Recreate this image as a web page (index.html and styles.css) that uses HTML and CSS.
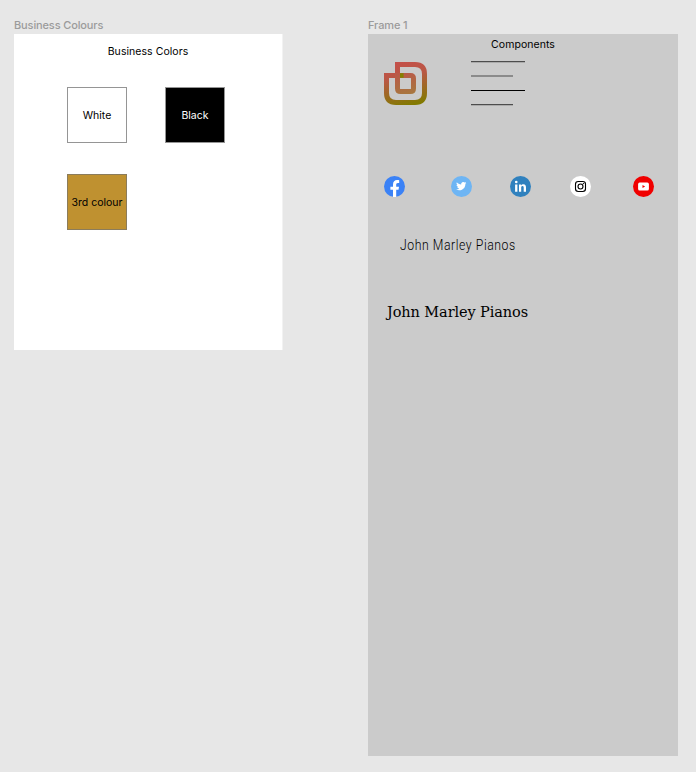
FILE: index.html
```html
<!DOCTYPE html>
<html lang="en">
<head>
<meta charset="utf-8">
<title>Business Colours</title>
<link rel="stylesheet" href="styles.css">
</head>
<body>
<main class="canvas">
  <section class="board">
    <h2 class="board-label">Business Colours</h2>
    <div class="frame colours">
      <h3 class="title">Business Colors</h3>
      <div class="swatches">
        <div class="swatch white">White</div>
        <div class="swatch black">Black</div>
        <div class="swatch gold">3rd colour</div>
      </div>
    </div>
  </section>
  <section class="board">
    <h2 class="board-label">Frame 1</h2>
    <div class="frame components">
      <h3 class="title">Components</h3>
      <div class="brand">
        <svg class="logo" viewBox="0 0 43 43">
          <defs>
            <linearGradient id="outer" gradientUnits="userSpaceOnUse" x1="16" y1="0" x2="26" y2="43"><stop offset="0" stop-color="#c4504a"/><stop offset=".35" stop-color="#b85844"/><stop offset="1" stop-color="#827a00"/></linearGradient>
            <linearGradient id="inner" gradientUnits="userSpaceOnUse" x1="16" y1="0" x2="26" y2="43"><stop offset="0" stop-color="#c4504a"/><stop offset=".3" stop-color="#b85c48"/><stop offset=".8" stop-color="#a67a3e"/></linearGradient>
          </defs>
          <path fill="none" stroke="url(#outer)" stroke-width="5" d="M13.5 14V2.5H31Q40.5 2.5 40.5 12V31Q40.5 40.5 31 40.5H12Q2.5 40.5 2.5 31V13.5H14"/>
          <path fill="none" stroke="url(#inner)" stroke-width="5" d="M13.5 13.5H26.5Q29.5 13.5 29.5 16.5V26.5Q29.5 29.5 26.5 29.5H16.5Q13.5 29.5 13.5 26.5Z"/>
          <path fill="#858000" d="M16 11.2h3.6v4.6H16z"/>
        </svg>
        <svg class="lines" viewBox="0 0 54 46">
          <path stroke="#4d4d4d" stroke-width="1.2" d="M0 1.7h54M0 16h42M0 44.6h42"/>
          <path stroke="#000" d="M0 30.5h54"/>
        </svg>
      </div>
      <div class="social">
        <svg viewBox="0 0 21 21"><circle cx="10.5" cy="10.5" r="10.5" fill="#3b82f6"/><path fill="#fff" d="M9 21v-7.2H6.4v-3H9V8.4C9 5.7 10.6 4.1 13 4.1c1.1 0 2.2.2 2.2.2v2.6h-1.3c-1.3 0-1.7.8-1.7 1.6v2.3H15l-.5 3h-2.3V21z"/></svg>
        <svg viewBox="0 0 21 21"><circle cx="10.5" cy="10.5" r="10.5" fill="#6eb5f4"/><path fill="#fff" transform="translate(5.1 4.9) scale(.43)" d="M23.9 4.6c-.9.4-1.8.7-2.8.8 1-.6 1.8-1.6 2.1-2.7-.9.6-2 1-3.1 1.2A4.9 4.9 0 0 0 11.8 8.4C7.7 8.2 4.1 6.2 1.7 3.2a4.9 4.9 0 0 0 1.5 6.5c-.8 0-1.6-.2-2.2-.6 0 2.4 1.6 4.4 3.9 4.9-.7.2-1.4.2-2.2.1.6 1.9 2.4 3.3 4.6 3.4A9.9 9.9 0 0 1 0 19.5c2.2 1.4 4.8 2.2 7.6 2.2 9.1 0 14-7.5 14-14v-.6c1-.7 1.8-1.6 2.3-2.5z"/></svg>
        <svg viewBox="0 0 21 21"><circle cx="10.5" cy="10.5" r="10.5" fill="#3081be"/><path fill="#fff" d="M5.1 8.4h2.3v7.4H5.1zM9 8.4h2.2v1c.4-.7 1.2-1.2 2.2-1.2 2.1 0 2.6 1.4 2.6 3.4v4.2h-2.3v-3.7c0-1 0-2-1.1-2-1.2 0-1.4.9-1.4 1.9v3.8H9z"/><circle cx="6.25" cy="6" r="1.3" fill="#fff"/></svg>
        <svg viewBox="0 0 21 21"><circle cx="10.5" cy="10.5" r="10.5" fill="#fff"/><g fill="none" stroke="#000" stroke-width="1.1"><rect x="5.5" y="5.5" width="10" height="10" rx="2.7"/><circle cx="10.5" cy="10.5" r="2.5"/></g><circle cx="13.4" cy="7.6" r=".7"/></svg>
        <svg viewBox="0 0 21 21"><circle cx="10.5" cy="10.5" r="10.5" fill="#f00000"/><rect x="5.1" y="6.6" width="10.8" height="7.9" rx="1.6" fill="#fff"/><path fill="#f00000" d="M9.5 9v3l2.6-1.5z"/></svg>
      </div>
      <p class="name-sans">John Marley Pianos</p>
      <p class="name-serif">John Marley Pianos</p>
    </div>
  </section>
</main>
</body>
</html>
```

FILE: styles.css
```css
* { box-sizing: border-box; }

body {
  margin: 0;
  background: #e7e7e7;
  font-family: Inter, "Liberation Sans", sans-serif;
}

.canvas {
  display: flex;
  align-items: flex-start;
  gap: 85px;
  height: 772px;
  padding: 17px 0 0 14px;
}

.board-label {
  height: 17px;
  margin: 0;
  color: #9b9b9b;
  font-size: 11px;
  font-weight: 500;
  letter-spacing: -0.13px;
  line-height: 17px;
  white-space: nowrap;
}

.frame {
  display: flex;
  flex-direction: column;
}

.colours {
  width: 269px;
  height: 316px;
  padding-top: 10px;
  background: #fff;
  border-right: 1px solid #f2f2f2;
}

.components {
  width: 310px;
  height: 722px;
  padding-top: 3px;
  background: #cbcbcb;
}

.title {
  margin: 0;
  font-size: 10.5px;
  font-weight: 400;
  line-height: 16px;
  letter-spacing: 0.05px;
  text-align: center;
}

.swatches {
  display: grid;
  grid-template-columns: 60px 60px;
  gap: 31px 38px;
  margin: 27px 0 0 53px;
}

.swatch {
  display: flex;
  align-items: center;
  justify-content: center;
  height: 56px;
  border: 1px solid #959595;
  font-size: 10.5px;
  white-space: nowrap;
}

.black { background: #000; color: #fff; }
.gold { background: #bf9130; border-color: #8b7c5b; }

.brand {
  display: flex;
  gap: 44px;
  margin: 9px 0 0 16px;
}

.logo { width: 43px; height: 43px; }
.lines { width: 54px; height: 46px; margin-top: -2px; }

.social {
  display: flex;
  justify-content: space-between;
  width: 270px;
  margin: 70px 0 0 16px;
}

.social svg { width: 21px; height: 21px; }
.social svg:nth-child(2) { margin-left: 7px; }
.social svg:nth-child(5) { margin-left: 4px; }

.name-sans,
.name-serif {
  width: max-content;
  height: 24px;
  line-height: 24px;
  white-space: nowrap;
  transform-origin: left center;
}

.name-sans {
  margin: 36px 0 0 32px;
  font-family: Roboto, sans-serif;
  font-size: 15.5px;
  font-weight: 350;
  letter-spacing: 0.7px;
  transform: scaleX(0.79);
}

.name-serif {
  margin: 43px 0 0 19px;
  font-family: "DejaVu Serif", serif;
  font-size: 15.5px;
  letter-spacing: -0.1px;
  transform: scaleX(0.935);
}
```
